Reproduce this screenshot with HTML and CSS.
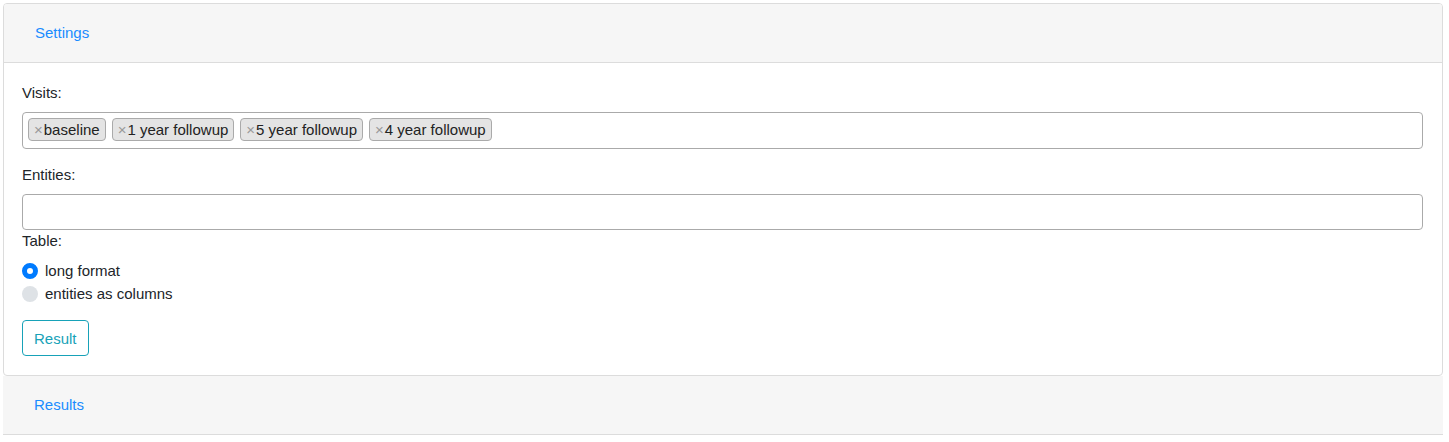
FILE: index.html
```html
<!DOCTYPE html>
<html>
<head>
<meta charset="utf-8">
<link rel="stylesheet" href="styles.css">
</head>
<body>
<div class="card">
  <div class="card-header"><a class="hdr-link">Settings</a></div>
  <div class="card-body">
    <div class="label">Visits:</div>
    <div class="multi">
      <span class="chip"><span class="x">×</span>baseline</span>
      <span class="chip"><span class="x">×</span>1 year followup</span>
      <span class="chip"><span class="x">×</span>5 year followup</span>
      <span class="chip"><span class="x">×</span>4 year followup</span>
    </div>
    <div class="label gap-top">Entities:</div>
    <div class="input"></div>
    <div class="label">Table:</div>
    <div class="radios">
      <div class="radio"><span class="dot on"></span>long format</div>
      <div class="radio"><span class="dot"></span>entities as columns</div>
    </div>
    <button class="btn">Result</button>
  </div>
</div>
<div class="panel">
  <div class="panel-header"><a class="hdr-link">Results</a></div>
</div>
</body>
</html>
```
FILE: styles.css
```css
* { box-sizing: border-box; }
html, body { margin: 0; }
body {
  padding: 3px 6px 0 3px;
  font-family: "Liberation Sans", Arial, sans-serif;
  font-size: 15px;
  color: #212529;
  background: #fff;
}
.card {
  border: 1px solid #dcdcdc;
  border-radius: 4px;
  overflow: hidden;
}
.card-header {
  height: 59px;
  background: #f6f6f6;
  border-bottom: 1px solid #dcdcdc;
  display: flex;
  align-items: center;
  padding-left: 31px;
}
.hdr-link {
  color: #1a8cff;
  font-size: 15px;
  line-height: 22px;
}
.card-body {
  padding: 19px 19px 19px 18px;
  display: flex;
  flex-direction: column;
  align-items: flex-start;
}
.label {
  line-height: 22px;
  margin-bottom: 8px;
}
.gap-top { margin-top: 15px; }
.multi {
  align-self: stretch;
  height: 37px;
  border: 1px solid #aaa;
  border-radius: 4px;
  display: flex;
  align-items: flex-start;
  gap: 6px;
  padding: 5px 5px 0;
}
.chip {
  display: inline-flex;
  align-items: center;
  height: 23px;
  background: #e4e4e4;
  border: 1px solid #aaa;
  border-radius: 4px;
  padding: 0 5px 0 5px;
  line-height: 21px;
  color: #222;
}
.x {
  color: #999;
  font-size: 15px;
  margin-right: 1px;
}
.input {
  align-self: stretch;
  height: 36px;
  border: 1px solid #aaa;
  border-radius: 4px;
}
.radios {
  margin-top: -1px;
  display: flex;
  flex-direction: column;
}
.radio {
  display: flex;
  align-items: center;
  line-height: 23px;
  height: 23px;
}
.dot {
  width: 16px;
  height: 16px;
  border-radius: 50%;
  background: #dee2e6;
  margin-right: 7px;
  flex: none;
}
.dot.on {
  background: #fff;
  border: 5px solid #007bff;
}
.btn {
  margin-top: 15px;
  height: 36px;
  padding: 0 11px;
  font-family: inherit;
  font-size: 15px;
  color: #17a2b8;
  background: #fff;
  border: 1px solid #17a2b8;
  border-radius: 4px;
}
.panel-header {
  height: 59px;
  background: #f6f6f6;
  border-bottom: 1px solid #dcdcdc;
  display: flex;
  align-items: center;
  padding-left: 31px;
}
```
